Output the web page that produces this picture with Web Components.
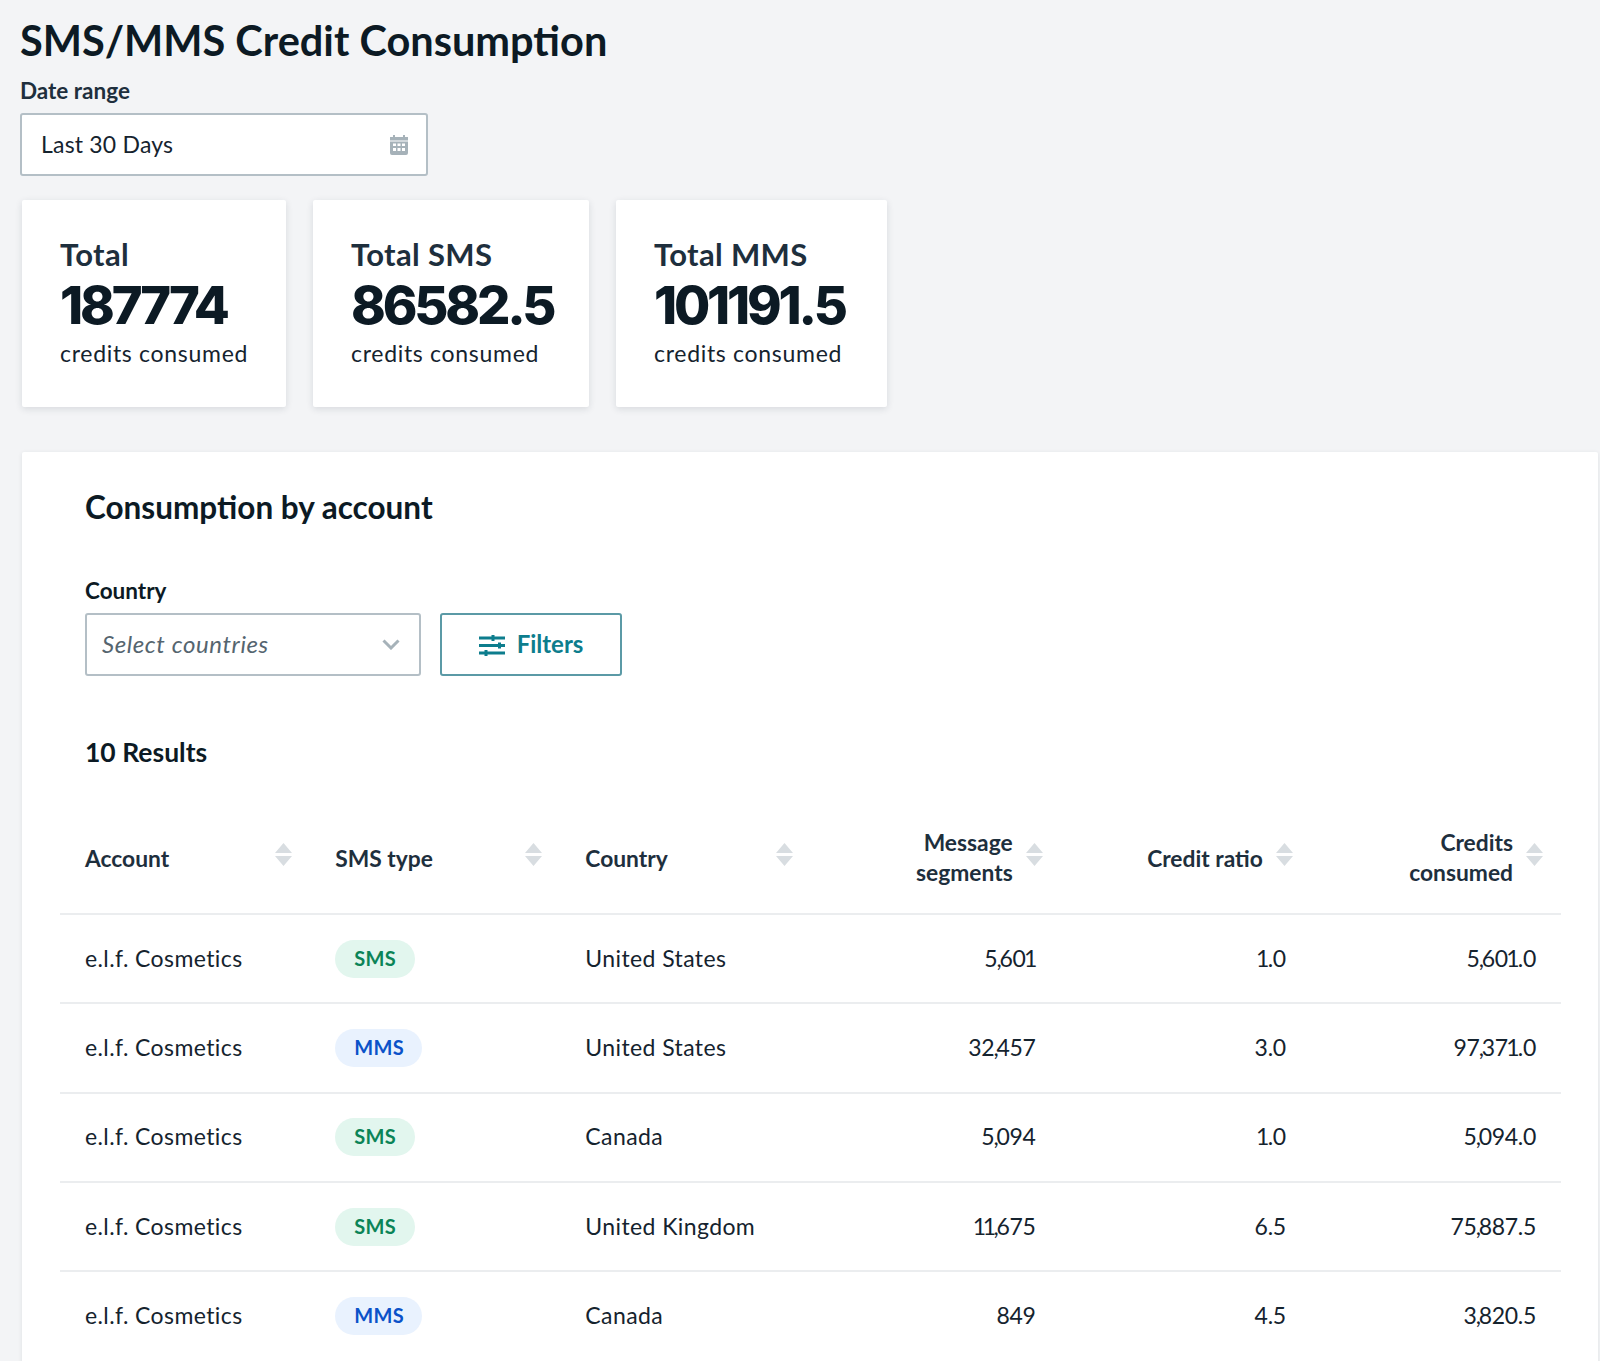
<!DOCTYPE html>
<html lang="en">
<head>
<meta charset="utf-8">
<title>SMS/MMS Credit Consumption</title>
<style>
  html, body { margin: 0; height: 1361px; overflow: hidden; background: #f3f4f6; }
  body { font-family: "Lato", "Liberation Sans", sans-serif; color: #0c1a24; font-variant-ligatures: none; }
</style>
</head>
<body>
<credit-page></credit-page>

<script>
// Lato tiene cifras tabulares: se estrechan "1" y "," para igualar la referencia
function tightDigits(text) {
  return text.replace(/[1,]/g, ch => `<span class="${ch === "," ? "dc" : "d1"}">${ch}</span>`);
}

// Etiqueta de campo (label + contenido)
class CreditField extends HTMLElement {
  constructor() {
    super();
    this.attachShadow({ mode: "open" }).innerHTML = `
      <style>
        :host { display: block; }
        label { display: block; font: 700 22.5px/24px "Lato", sans-serif; color: var(--label, #1e2f3d); margin-bottom: 10px; }
        .box { box-sizing: border-box; height: 63px; display: flex; align-items: center; justify-content: space-between;
               background: #fff; border: 2px solid #b4bfc6; border-radius: 3px; }
      </style>
      <label></label>
      <div class="box" part="box"><slot></slot><slot name="icon"></slot></div>
    `;
    this.shadowRoot.querySelector("label").textContent = this.getAttribute("label");
  }
}
customElements.define("credit-field", CreditField);

// Tarjeta de total
class StatCard extends HTMLElement {
  constructor() {
    super();
    this.attachShadow({ mode: "open" }).innerHTML = `
      <style>
        :host { display: block; box-sizing: border-box; height: 207px; padding: 36.500px 30px 0 38px; background: #fff;
                border-radius: 2px; box-shadow: 0 2px 7px rgba(30,45,60,.13); }
        .t { font: 700 31px/34px "Lato", sans-serif; color: #1e2f3d; letter-spacing: .35px; }
        .n { font: 800 52.500px/58px "Inter", sans-serif; color: #0c1a24; letter-spacing: -3.200px; margin-top: 5px; white-space: nowrap; }
        .c { font: 400 23px/28px "Lato", sans-serif; color: #15232e; margin-top: 5.500px; letter-spacing: .7px; }
      </style>
      <div class="t"></div><div class="n"></div><div class="c">credits consumed</div>
    `;
    this.shadowRoot.querySelector(".t").textContent = this.getAttribute("title");
    this.shadowRoot.querySelector(".n").textContent = this.getAttribute("value");
  }
}
customElements.define("stat-card", StatCard);

// Pastilla SMS / MMS
class TypeTag extends HTMLElement {
  constructor() {
    super();
    const type = this.getAttribute("type");
    const bg = type === "SMS" ? "#e2f6ee" : "#e9f2fe";
    const fg = type === "SMS" ? "#0b8457" : "#0b52c9";
    this.attachShadow({ mode: "open" }).innerHTML = `
      <style>
        :host { display: inline-block; box-sizing: border-box; height: 38px; padding: 0 19px 0 19px; border-radius: 19px;
                background: ${bg}; color: ${fg}; font: 700 20px/37px "Lato", sans-serif; }
        :host([type="MMS"]) { padding-right: 18px; }
      </style>${type}
    `;
  }
}
customElements.define("type-tag", TypeTag);

// Celda de cabecera con flechas de orden
class SortHeader extends HTMLElement {
  constructor() {
    super();
    this.attachShadow({ mode: "open" }).innerHTML = `
      <style>
        :host { display: flex; align-items: flex-start; padding: 0 18px 0 25px; height: 100%; box-sizing: border-box; }
        .txt { flex: 1; font: 700 22.8px/29.5px "Lato", sans-serif; color: #1e2f3d; padding-top: 16px; }
        :host([lines="2"]) .txt { padding-top: 0; }
        :host([right]) .txt { text-align: right; padding-right: 13px; }
        svg { flex: none; margin-top: 15px; }
      </style>
      <div class="txt"><slot></slot></div>
      <svg width="17" height="23" viewBox="0 0 17 23"><path fill="#d8dde1" d="M8.5 0 17 10H0zM0 13h17l-8.500 10z"/></svg>
    `;
  }
}
customElements.define("sort-header", SortHeader);

// Tabla de consumo
class ConsumptionTable extends HTMLElement {
  constructor() {
    super();
    const rows = [
      ["e.l.f. Cosmetics", "SMS", "United States", "5,601", "1.0", "5,601.0"],
      ["e.l.f. Cosmetics", "MMS", "United States", "32,457", "3.0", "97,371.0"],
      ["e.l.f. Cosmetics", "SMS", "Canada", "5,094", "1.0", "5,094.0"],
      ["e.l.f. Cosmetics", "SMS", "United Kingdom", "11,675", "6.5", "75,887.5"],
      ["e.l.f. Cosmetics", "MMS", "Canada", "849", "4.5", "3,820.5"],
    ];
    const body = rows.map(r => `
      <div class="row">
        <div class="cell">${r[0]}</div>
        <div class="cell tag"><type-tag type="${r[1]}"></type-tag></div>
        <div class="cell">${r[2]}</div>
        <div class="cell num">${tightDigits(r[3])}</div>
        <div class="cell num">${tightDigits(r[4])}</div>
        <div class="cell num">${tightDigits(r[5])}</div>
      </div>`).join("");
    this.attachShadow({ mode: "open" }).innerHTML = `
      <style>
        :host { display: block; }
        .head, .row { display: grid; grid-template-columns: repeat(6, 1fr); }
        .head { height: 85px; }
        .row { height: 89.3px; box-sizing: border-box; border-top: 2px solid #ebedef; align-items: center; }
        .cell { padding: 0 25px 2px; font: 400 23px/28px "Lato", sans-serif; color: #15232e; letter-spacing: .4px; }
        .cell.tag { padding-bottom: 0; }
        .num { text-align: right; letter-spacing: -.3px; }
        .d1 { margin-left: -1.500px; letter-spacing: -1.800px; }
        .dc { margin-left: -.800px; letter-spacing: -2.300px; }
      </style>
      <div class="head">
        <sort-header>Account</sort-header>
        <sort-header>SMS type</sort-header>
        <sort-header>Country</sort-header>
        <sort-header right lines="2">Message<br>segments</sort-header>
        <sort-header right>Credit ratio</sort-header>
        <sort-header right lines="2">Credits<br>consumed</sort-header>
      </div>
      ${body}
    `;
  }
}
customElements.define("consumption-table", ConsumptionTable);

// Página completa
class CreditPage extends HTMLElement {
  constructor() {
    super();
    this.attachShadow({ mode: "open" }).innerHTML = `
      <style>
        :host { display: block; padding: 14px 0 0 20px; }
        h1 { margin: 0 0 13px; font: 700 41.5px/52px "Lato", sans-serif; color: #0c1a24; }
        .date { width: 408px; }
        .date span { padding: 0 0 2px 19px; font: 400 23px/28px "Lato", sans-serif; color: #15232e; letter-spacing: .2px; }
        .date svg { margin-right: 18px; }
        .stats { display: flex; gap: 27px; margin: 24px 0 45px 2px; }
        .stats stat-card:nth-child(1) { width: 264px; }
        .stats stat-card:nth-child(2) { width: 276px; }
        .stats stat-card:nth-child(3) { width: 271px; }
        .panel { margin: 0 2px 0 2px; height: 920px; background: #fff; padding: 36px 37px 0 38px; box-sizing: border-box; border-radius: 2px;
                 box-shadow: 0 1px 4px rgba(30,45,60,.1); }
        h2 { margin: 0 0 0 25px; font: 700 31.5px/38px "Lato", sans-serif; color: #0c1a24; }
        .filters { display: flex; align-items: flex-end; gap: 19px; margin: 53px 0 0 25px; --label: #0c1a24; }
        .sel { width: 336px; }
        .sel span { padding: 0 0 2px 15px; font: italic 400 24px/28px "Lato", sans-serif; color: #55656f; letter-spacing: .6px; }
        .sel svg { margin-right: 19px; }
        .btn { box-sizing: border-box; width: 182px; height: 63px; padding-bottom: 2px; display: flex; align-items: center; justify-content: center; gap: 12px;
               border: 2px solid #5b9aa6; border-radius: 3px; color: #0d7d8d; font: 700 24px/28px "Lato", sans-serif; background: #fff; }
        .btn svg { margin-top: 2px; }
        h3 { margin: 60px 0 0 25px; font: 700 26.5px/32px "Lato", sans-serif; color: #0c1a24; }
        consumption-table { margin-top: 60px; }
      </style>
      <h1>SMS/MMS Credit Consumption</h1>
      <credit-field class="date" label="Date range">
        <span>Last 30 Days</span>
        <svg slot="icon" width="18" height="20" viewBox="0 0 18 20">
          <path fill="#a6b2b9" fill-rule="evenodd" d="M3 0h2v2h8V0h2v2h3v3.500H0V2h3zM0 6.500h18V18a2 2 0 0 1-2 2H2a2 2 0 0 1-2-2zM3 8.500V11h3V8.500zm4.500 0V11h3V8.500zm4.500 0V11h3V8.500zM3 13v3h3v-3zm4.500 0v3h3v-3zm4.500 0v3h3v-3z"/>
        </svg>
      </credit-field>
      <div class="stats">
        <stat-card title="Total" value="187774"></stat-card>
        <stat-card title="Total SMS" value="86582.5"></stat-card>
        <stat-card title="Total MMS" value="101191.5"></stat-card>
      </div>
      <div class="panel">
        <h2>Consumption by account</h2>
        <div class="filters">
          <credit-field class="sel" label="Country">
            <span>Select countries</span>
            <svg slot="icon" width="18" height="11" viewBox="0 0 18 11"><path fill="none" stroke="#a6b2b9" stroke-width="3" d="M1.500 1.500 9 9l7.500-7.500"/></svg>
          </credit-field>
          <div class="btn">
            <svg width="26" height="22" viewBox="0 0 26 22">
              <path fill="#0d7d8d" d="M0 2.500h26v3H0zM0 10h26v3H0zM0 17.500h26v3H0zM12.500 1h3v6h-3zM19 8.500h3v6h-3zM5.500 16h3v6h-3z"/>
            </svg>
            Filters
          </div>
        </div>
        <h3>10 Results</h3>
        <consumption-table></consumption-table>
      </div>
    `;
  }
}
customElements.define("credit-page", CreditPage);
</script>
</body>
</html>
